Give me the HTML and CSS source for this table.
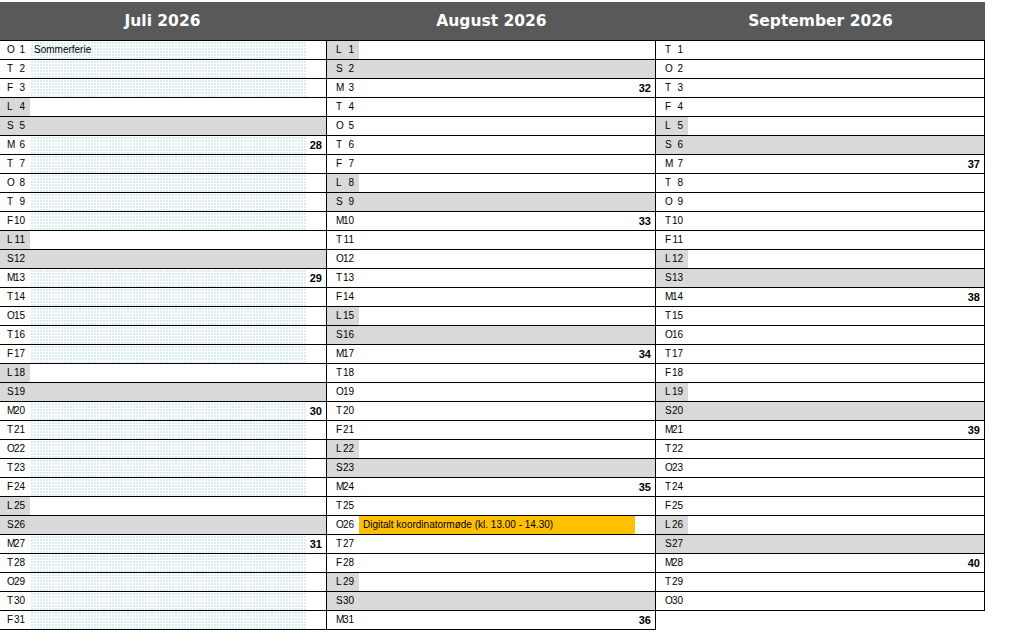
FILE: index.html
```html
<!DOCTYPE html>
<html lang="da">
<head>
<meta charset="utf-8">
<title>Kalender juli - september 2026</title>
<link rel="stylesheet" href="styles.css">
</head>
<body>
<div class="sheet">
  <div class="heads">
    <div class="head">Juli 2026</div>
    <div class="head">August 2026</div>
    <div class="head">September 2026</div>
  </div>
  <div class="months">
    <div class="month">
      <div class="row vac"><div class="day"><span class="wd">O</span><span class="dn">1</span></div><div class="fill">Sommerferie</div></div>
      <div class="row vac"><div class="day"><span class="wd">T</span><span class="dn">2</span></div><div class="fill"></div></div>
      <div class="row vac"><div class="day"><span class="wd">F</span><span class="dn">3</span></div><div class="fill"></div></div>
      <div class="row sat"><div class="day"><span class="wd">L</span><span class="dn">4</span></div><div class="fill"></div></div>
      <div class="row sun"><div class="day"><span class="wd">S</span><span class="dn">5</span></div><div class="fill"></div></div>
      <div class="row vac"><div class="day"><span class="wd">M</span><span class="dn">6</span></div><div class="fill"></div><div class="wk">28</div></div>
      <div class="row vac"><div class="day"><span class="wd">T</span><span class="dn">7</span></div><div class="fill"></div></div>
      <div class="row vac"><div class="day"><span class="wd">O</span><span class="dn">8</span></div><div class="fill"></div></div>
      <div class="row vac"><div class="day"><span class="wd">T</span><span class="dn">9</span></div><div class="fill"></div></div>
      <div class="row vac"><div class="day"><span class="wd">F</span><span class="dn">10</span></div><div class="fill"></div></div>
      <div class="row sat"><div class="day"><span class="wd">L</span><span class="dn">11</span></div><div class="fill"></div></div>
      <div class="row sun"><div class="day"><span class="wd">S</span><span class="dn">12</span></div><div class="fill"></div></div>
      <div class="row vac"><div class="day"><span class="wd">M</span><span class="dn">13</span></div><div class="fill"></div><div class="wk">29</div></div>
      <div class="row vac"><div class="day"><span class="wd">T</span><span class="dn">14</span></div><div class="fill"></div></div>
      <div class="row vac"><div class="day"><span class="wd">O</span><span class="dn">15</span></div><div class="fill"></div></div>
      <div class="row vac"><div class="day"><span class="wd">T</span><span class="dn">16</span></div><div class="fill"></div></div>
      <div class="row vac"><div class="day"><span class="wd">F</span><span class="dn">17</span></div><div class="fill"></div></div>
      <div class="row sat"><div class="day"><span class="wd">L</span><span class="dn">18</span></div><div class="fill"></div></div>
      <div class="row sun"><div class="day"><span class="wd">S</span><span class="dn">19</span></div><div class="fill"></div></div>
      <div class="row vac"><div class="day"><span class="wd">M</span><span class="dn">20</span></div><div class="fill"></div><div class="wk">30</div></div>
      <div class="row vac"><div class="day"><span class="wd">T</span><span class="dn">21</span></div><div class="fill"></div></div>
      <div class="row vac"><div class="day"><span class="wd">O</span><span class="dn">22</span></div><div class="fill"></div></div>
      <div class="row vac"><div class="day"><span class="wd">T</span><span class="dn">23</span></div><div class="fill"></div></div>
      <div class="row vac"><div class="day"><span class="wd">F</span><span class="dn">24</span></div><div class="fill"></div></div>
      <div class="row sat"><div class="day"><span class="wd">L</span><span class="dn">25</span></div><div class="fill"></div></div>
      <div class="row sun"><div class="day"><span class="wd">S</span><span class="dn">26</span></div><div class="fill"></div></div>
      <div class="row vac"><div class="day"><span class="wd">M</span><span class="dn">27</span></div><div class="fill"></div><div class="wk">31</div></div>
      <div class="row vac"><div class="day"><span class="wd">T</span><span class="dn">28</span></div><div class="fill"></div></div>
      <div class="row vac"><div class="day"><span class="wd">O</span><span class="dn">29</span></div><div class="fill"></div></div>
      <div class="row vac"><div class="day"><span class="wd">T</span><span class="dn">30</span></div><div class="fill"></div></div>
      <div class="row vac"><div class="day"><span class="wd">F</span><span class="dn">31</span></div><div class="fill"></div></div>
    </div>
    <div class="month">
      <div class="row sat"><div class="day"><span class="wd">L</span><span class="dn">1</span></div><div class="fill"></div></div>
      <div class="row sun"><div class="day"><span class="wd">S</span><span class="dn">2</span></div><div class="fill"></div></div>
      <div class="row"><div class="day"><span class="wd">M</span><span class="dn">3</span></div><div class="fill"></div><div class="wk">32</div></div>
      <div class="row"><div class="day"><span class="wd">T</span><span class="dn">4</span></div><div class="fill"></div></div>
      <div class="row"><div class="day"><span class="wd">O</span><span class="dn">5</span></div><div class="fill"></div></div>
      <div class="row"><div class="day"><span class="wd">T</span><span class="dn">6</span></div><div class="fill"></div></div>
      <div class="row"><div class="day"><span class="wd">F</span><span class="dn">7</span></div><div class="fill"></div></div>
      <div class="row sat"><div class="day"><span class="wd">L</span><span class="dn">8</span></div><div class="fill"></div></div>
      <div class="row sun"><div class="day"><span class="wd">S</span><span class="dn">9</span></div><div class="fill"></div></div>
      <div class="row"><div class="day"><span class="wd">M</span><span class="dn">10</span></div><div class="fill"></div><div class="wk">33</div></div>
      <div class="row"><div class="day"><span class="wd">T</span><span class="dn">11</span></div><div class="fill"></div></div>
      <div class="row"><div class="day"><span class="wd">O</span><span class="dn">12</span></div><div class="fill"></div></div>
      <div class="row"><div class="day"><span class="wd">T</span><span class="dn">13</span></div><div class="fill"></div></div>
      <div class="row"><div class="day"><span class="wd">F</span><span class="dn">14</span></div><div class="fill"></div></div>
      <div class="row sat"><div class="day"><span class="wd">L</span><span class="dn">15</span></div><div class="fill"></div></div>
      <div class="row sun"><div class="day"><span class="wd">S</span><span class="dn">16</span></div><div class="fill"></div></div>
      <div class="row"><div class="day"><span class="wd">M</span><span class="dn">17</span></div><div class="fill"></div><div class="wk">34</div></div>
      <div class="row"><div class="day"><span class="wd">T</span><span class="dn">18</span></div><div class="fill"></div></div>
      <div class="row"><div class="day"><span class="wd">O</span><span class="dn">19</span></div><div class="fill"></div></div>
      <div class="row"><div class="day"><span class="wd">T</span><span class="dn">20</span></div><div class="fill"></div></div>
      <div class="row"><div class="day"><span class="wd">F</span><span class="dn">21</span></div><div class="fill"></div></div>
      <div class="row sat"><div class="day"><span class="wd">L</span><span class="dn">22</span></div><div class="fill"></div></div>
      <div class="row sun"><div class="day"><span class="wd">S</span><span class="dn">23</span></div><div class="fill"></div></div>
      <div class="row"><div class="day"><span class="wd">M</span><span class="dn">24</span></div><div class="fill"></div><div class="wk">35</div></div>
      <div class="row"><div class="day"><span class="wd">T</span><span class="dn">25</span></div><div class="fill"></div></div>
      <div class="row ev"><div class="day"><span class="wd">O</span><span class="dn">26</span></div><div class="fill">Digitalt koordinatormøde (kl. 13.00 - 14.30)</div></div>
      <div class="row"><div class="day"><span class="wd">T</span><span class="dn">27</span></div><div class="fill"></div></div>
      <div class="row"><div class="day"><span class="wd">F</span><span class="dn">28</span></div><div class="fill"></div></div>
      <div class="row sat"><div class="day"><span class="wd">L</span><span class="dn">29</span></div><div class="fill"></div></div>
      <div class="row sun"><div class="day"><span class="wd">S</span><span class="dn">30</span></div><div class="fill"></div></div>
      <div class="row"><div class="day"><span class="wd">M</span><span class="dn">31</span></div><div class="fill"></div><div class="wk">36</div></div>
    </div>
    <div class="month">
      <div class="row"><div class="day"><span class="wd">T</span><span class="dn">1</span></div><div class="fill"></div></div>
      <div class="row"><div class="day"><span class="wd">O</span><span class="dn">2</span></div><div class="fill"></div></div>
      <div class="row"><div class="day"><span class="wd">T</span><span class="dn">3</span></div><div class="fill"></div></div>
      <div class="row"><div class="day"><span class="wd">F</span><span class="dn">4</span></div><div class="fill"></div></div>
      <div class="row sat"><div class="day"><span class="wd">L</span><span class="dn">5</span></div><div class="fill"></div></div>
      <div class="row sun"><div class="day"><span class="wd">S</span><span class="dn">6</span></div><div class="fill"></div></div>
      <div class="row"><div class="day"><span class="wd">M</span><span class="dn">7</span></div><div class="fill"></div><div class="wk">37</div></div>
      <div class="row"><div class="day"><span class="wd">T</span><span class="dn">8</span></div><div class="fill"></div></div>
      <div class="row"><div class="day"><span class="wd">O</span><span class="dn">9</span></div><div class="fill"></div></div>
      <div class="row"><div class="day"><span class="wd">T</span><span class="dn">10</span></div><div class="fill"></div></div>
      <div class="row"><div class="day"><span class="wd">F</span><span class="dn">11</span></div><div class="fill"></div></div>
      <div class="row sat"><div class="day"><span class="wd">L</span><span class="dn">12</span></div><div class="fill"></div></div>
      <div class="row sun"><div class="day"><span class="wd">S</span><span class="dn">13</span></div><div class="fill"></div></div>
      <div class="row"><div class="day"><span class="wd">M</span><span class="dn">14</span></div><div class="fill"></div><div class="wk">38</div></div>
      <div class="row"><div class="day"><span class="wd">T</span><span class="dn">15</span></div><div class="fill"></div></div>
      <div class="row"><div class="day"><span class="wd">O</span><span class="dn">16</span></div><div class="fill"></div></div>
      <div class="row"><div class="day"><span class="wd">T</span><span class="dn">17</span></div><div class="fill"></div></div>
      <div class="row"><div class="day"><span class="wd">F</span><span class="dn">18</span></div><div class="fill"></div></div>
      <div class="row sat"><div class="day"><span class="wd">L</span><span class="dn">19</span></div><div class="fill"></div></div>
      <div class="row sun"><div class="day"><span class="wd">S</span><span class="dn">20</span></div><div class="fill"></div></div>
      <div class="row"><div class="day"><span class="wd">M</span><span class="dn">21</span></div><div class="fill"></div><div class="wk">39</div></div>
      <div class="row"><div class="day"><span class="wd">T</span><span class="dn">22</span></div><div class="fill"></div></div>
      <div class="row"><div class="day"><span class="wd">O</span><span class="dn">23</span></div><div class="fill"></div></div>
      <div class="row"><div class="day"><span class="wd">T</span><span class="dn">24</span></div><div class="fill"></div></div>
      <div class="row"><div class="day"><span class="wd">F</span><span class="dn">25</span></div><div class="fill"></div></div>
      <div class="row sat"><div class="day"><span class="wd">L</span><span class="dn">26</span></div><div class="fill"></div></div>
      <div class="row sun"><div class="day"><span class="wd">S</span><span class="dn">27</span></div><div class="fill"></div></div>
      <div class="row"><div class="day"><span class="wd">M</span><span class="dn">28</span></div><div class="fill"></div><div class="wk">40</div></div>
      <div class="row"><div class="day"><span class="wd">T</span><span class="dn">29</span></div><div class="fill"></div></div>
      <div class="row"><div class="day"><span class="wd">O</span><span class="dn">30</span></div><div class="fill"></div></div>
    </div>
  </div>
</div>
</body>
</html>
```

FILE: styles.css
```css
html, body {
  margin: 0;
  padding: 0;
  background: #ffffff;
}

body {
  font-family: "Liberation Sans", Arial, sans-serif;
  font-size: 10px;
  color: #000000;
  overflow: hidden;
}

.sheet {
  width: 987px;
  margin: 2px 0 0 -2px;
}

.heads {
  display: flex;
  height: 38px;
  background: #595959;
}

.head {
  width: 329px;
  display: flex;
  align-items: center;
  justify-content: center;
  color: #ffffff;
  font-family: "DejaVu Sans", Verdana, sans-serif;
  font-weight: bold;
  font-size: 15.5px;
}

.months {
  display: flex;
  align-items: flex-start;
  border-top: 1px solid #000000;
}

.month {
  width: 329px;
  box-sizing: border-box;
  border-right: 1px solid #000000;
}

.row {
  display: flex;
  height: 19px;
  box-sizing: border-box;
  border-bottom: 1px solid #000000;
  line-height: 18px;
}

.day {
  width: 32px;
  flex: none;
  display: flex;
  box-sizing: border-box;
  padding-left: 9px;
}

.wd {
  width: 6px;
  white-space: nowrap;
}

.dn {
  width: 12px;
  text-align: right;
}

.fill {
  width: 276px;
  flex: none;
  box-sizing: border-box;
  padding-left: 4px;
  white-space: nowrap;
  overflow: hidden;
}

.wk {
  flex: 1;
  text-align: right;
  padding-right: 4px;
  font-weight: bold;
  font-size: 11px;
}

.sat .day {
  background: #d9d9d9;
}

.sun {
  background: #d9d9d9;
}

.vac .fill {
  background-color: #daedf3;
  background-image:
    linear-gradient(90deg, #ffffff 1px, transparent 1px),
    linear-gradient(#ffffff 1px, transparent 1px);
  background-size: 3px 3px;
}

.ev .fill {
  background: #ffc000;
}
```
